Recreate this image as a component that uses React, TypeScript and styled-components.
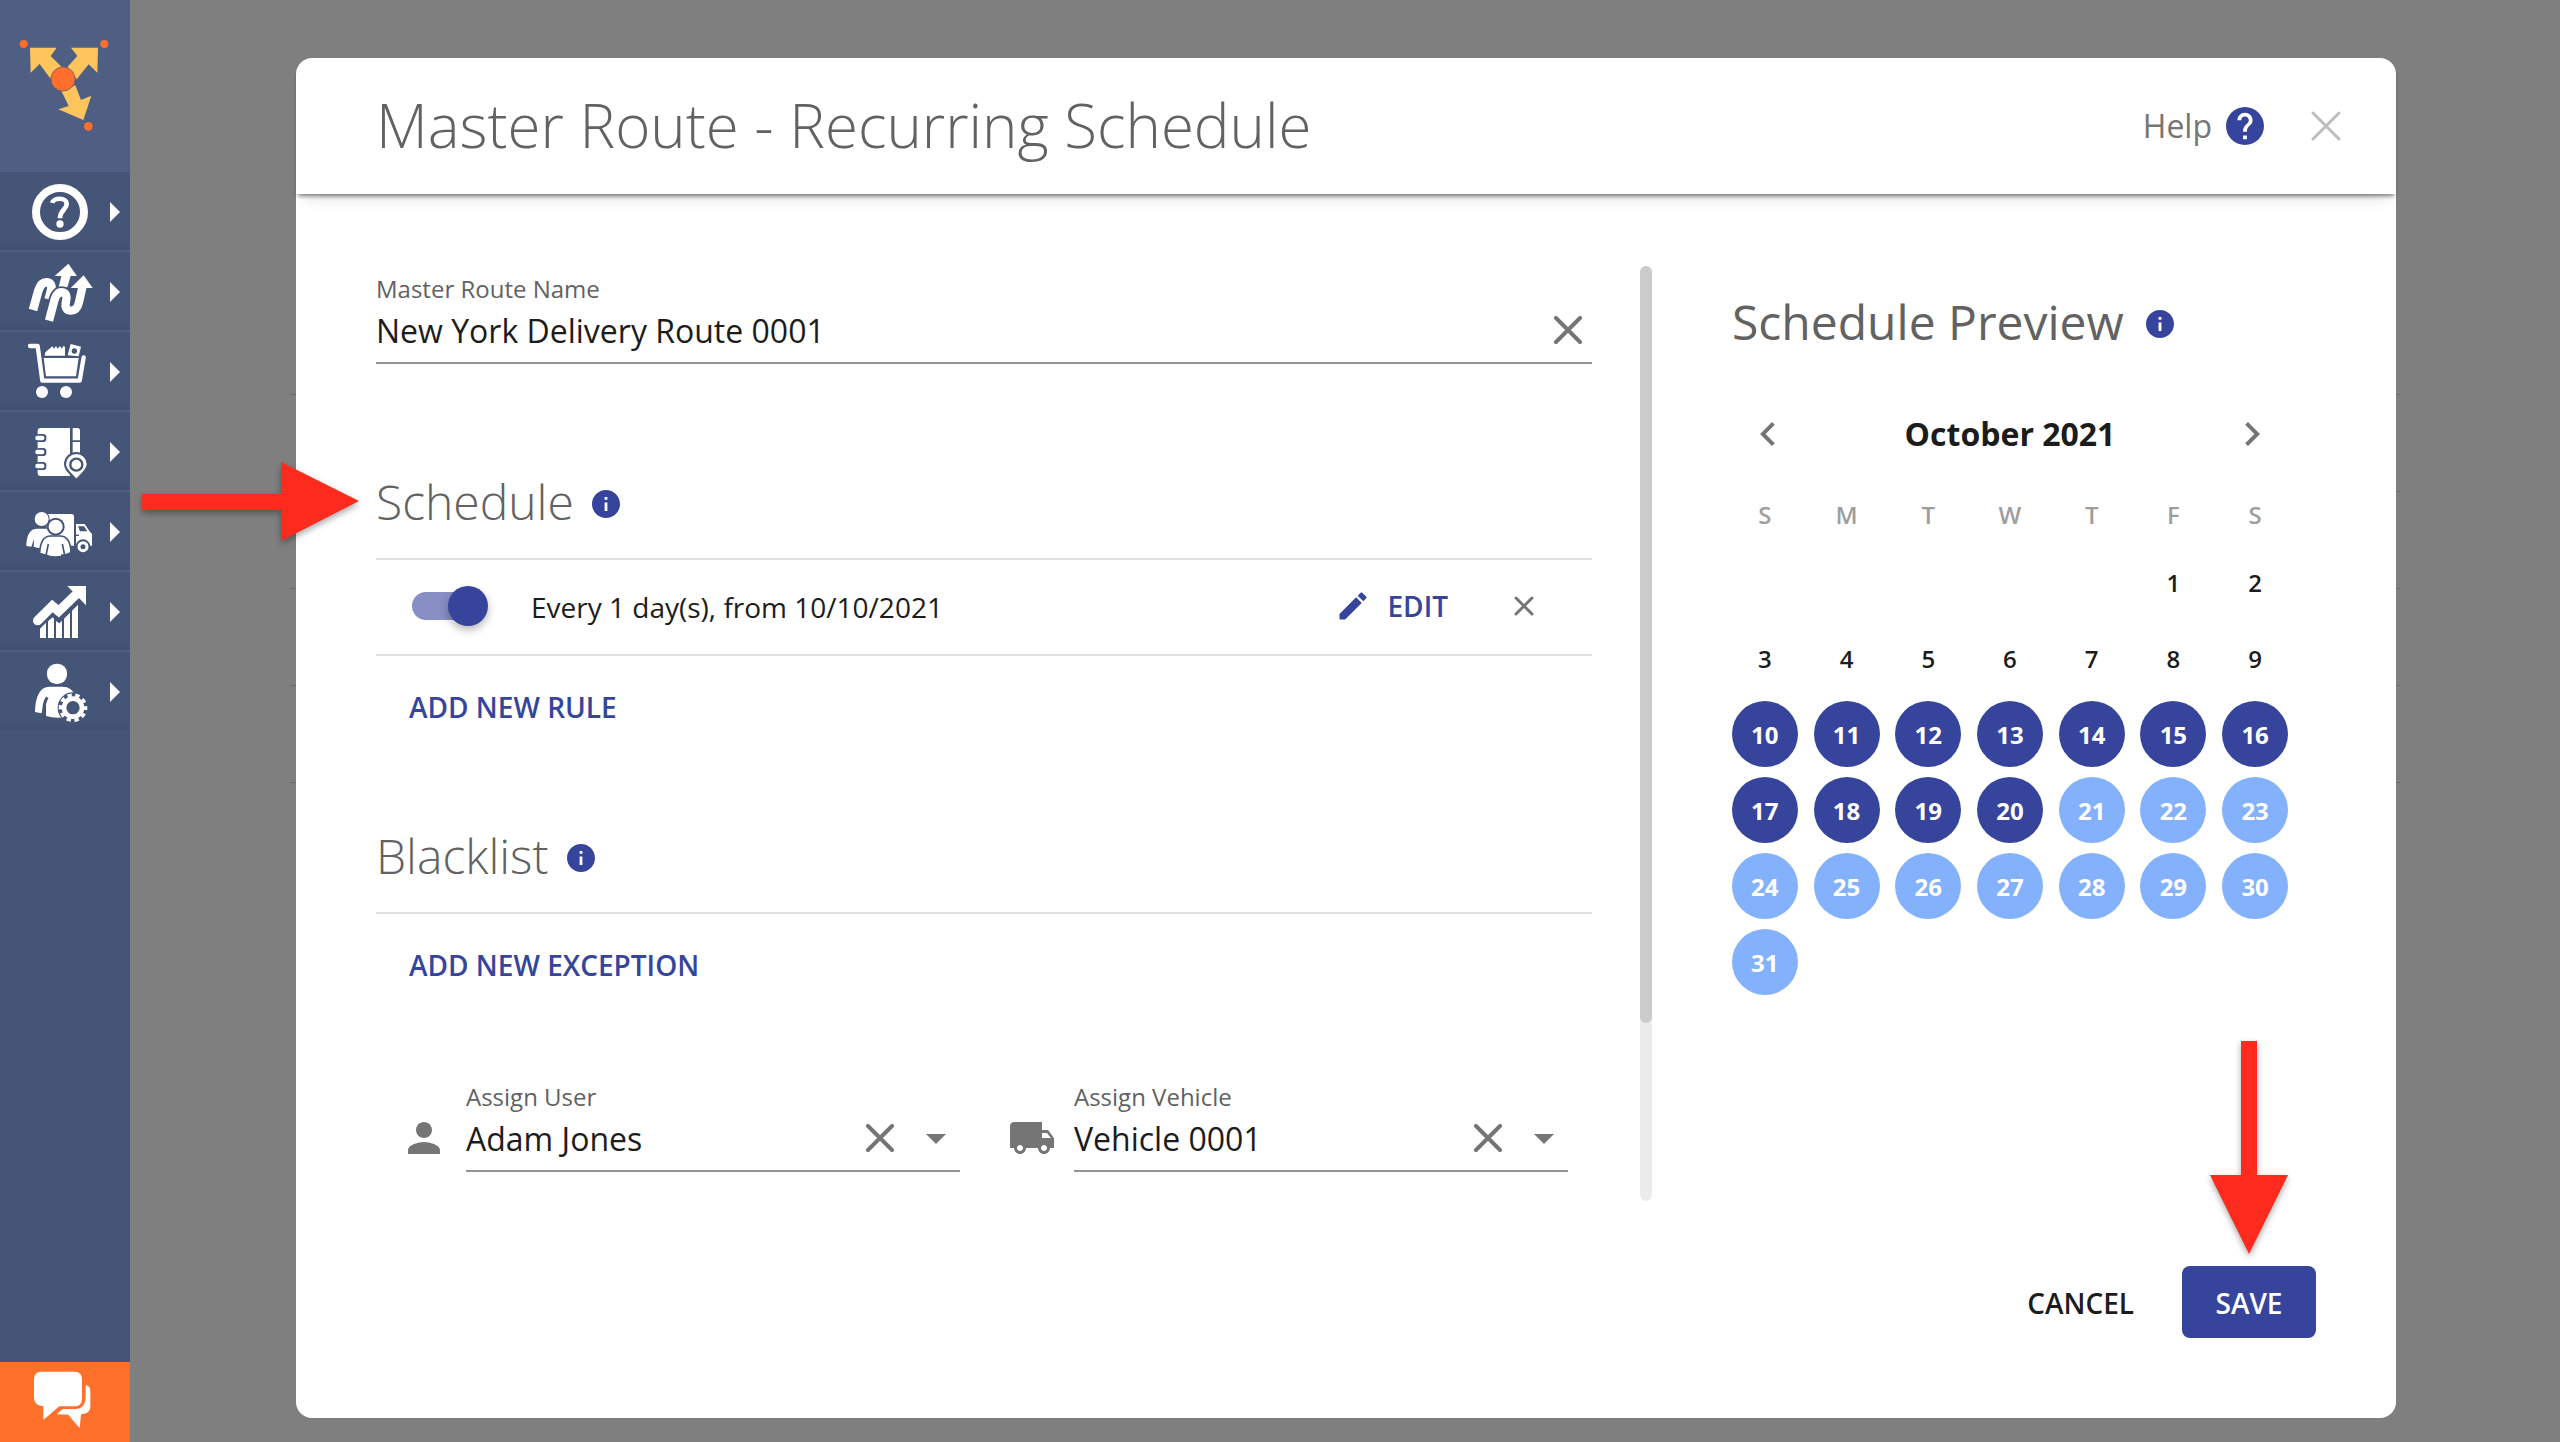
import React, { useState } from "react";
import styled, { createGlobalStyle } from "styled-components";

const color = {
  indigo: "#36459b",
  indigoSoft: "#878fc5",
  sky: "#84b1fc",
  ink: "#1c1c1c",
  grey: "#626262",
  icon: "#757575",
  muted: "#9e9e9e",
  rule: "#e0e0e0",
  underline: "#949494",
  red: "#fc2b1e",
  nav: "#455578",
  navLight: "#4f5f84",
  orange: "#ff702b",
};

const GlobalStyle = createGlobalStyle`
  *, *::before, *::after { box-sizing: border-box; }
  body {
    margin: 0;
    background: #7f7f7f;
    color: ${color.ink};
    font-family: "Open Sans", "Noto Sans", sans-serif;
  }
  button, input, select { font: inherit; color: inherit; }
`;

const Screen = styled.div`
  display: flex;
  min-height: 100vh;
`;

/* ---------- side navigation ---------- */

const Sidebar = styled.nav`
  display: flex;
  flex-direction: column;
  flex: none;
  width: 130px;
  background: ${color.nav};
`;

const LogoLink = styled.a`
  display: flex;
  height: 170px;
  background: ${color.navLight};
`;

const NavItem = styled.button`
  display: flex;
  align-items: center;
  gap: 14px;
  height: 80px;
  padding: 2px 0 0 24px;
  border: 0;
  border-top: 2px solid ${color.navLight};
  background: linear-gradient(${color.nav} 90%, #415073);
  color: #fff;
  cursor: pointer;
`;

const NavCaret = styled.span`
  border: solid transparent;
  border-width: 10px 0 10px 10px;
  border-left-color: #fff;
`;

const ChatButton = styled.button`
  display: flex;
  height: 80px;
  margin-top: auto;
  padding: 0;
  border: 0;
  background: ${color.orange};
  cursor: pointer;
`;

const Logo = () => (
  <svg width="130" height="171" viewBox="0 0 390 513" aria-hidden="true">
    <g fill="#fdc55c">
      <path d="M90 143H170L152 168L186 202L150 234L119 192L92 218Z" />
      <path d="M294 143H213L232 168L203 200L230 238L266 193L292 218Z" />
      <path d="M184 272L206 318L175 328L250 360L274 287L243 300L226 256Z" />
    </g>
    <g fill="#ff6f2b">
      <circle cx="189" cy="237" r="36" stroke="#8c5f5f" strokeWidth="3" />
      <circle cx="71" cy="132" r="12" />
      <circle cx="313" cy="132" r="12" />
      <circle cx="265" cy="379" r="13" />
    </g>
  </svg>
);

const NavGlyph = ({ top, children }: { top: number; children: React.ReactNode }) => (
  <svg width="72" height="64" viewBox={`72 ${top} 216 192`} fill="#fff" aria-hidden="true">
    {children}
  </svg>
);

const HelpGlyph = () => (
  <NavGlyph top={540}>
    <circle cx="180" cy="636" r="72" fill="none" stroke="#fff" strokeWidth="24" />
    <path d="M157 609C160 593 200 590 200 613C200 628 180 630 180 655" fill="none" stroke="#fff" strokeWidth="14" />
    <circle cx="180" cy="672" r="11" />
  </NavGlyph>
);

const RoutesGlyph = () => (
  <NavGlyph top={780}>
    <path d="M205 791L231 828H212L202 862H176L184 828H164Z" />
    <g fill="none">
      <path d="M99 930L115 872Q123 846 141 847Q160 850 152 876L146 898" stroke="#fff" strokeWidth="26" />
      <path d="M147 962L164 898Q172 874 188 877Q204 881 198 904Q192 932 213 932Q232 931 237 906L248 858" stroke={color.nav} strokeWidth="36" />
      <path d="M147 962L164 898Q172 874 188 877Q204 881 198 904Q192 932 213 932Q232 931 237 906L248 858" stroke="#fff" strokeWidth="25" />
    </g>
    <path d="M251 826L278 864H212Z" />
  </NavGlyph>
);

const CartGlyph = () => (
  <NavGlyph top={1020}>
    <path d="M90 1038H113L127 1142H239L251 1072" fill="none" stroke="#fff" strokeWidth="13" strokeLinejoin="round" strokeLinecap="round" />
    <path d="M131 1074H236L228 1129H138Z" />
    <path d="M134 1067L136 1057L157 1039L162 1046L168 1038L173 1046L180 1038L185 1046L190 1038L195 1040V1067Z" />
    <path d="M212 1032L243 1040L236 1069L203 1066Z" />
    <circle cx="223" cy="1053" r="8" fill={color.nav} />
    <circle cx="126" cy="1176" r="18" />
    <circle cx="198" cy="1176" r="18" />
  </NavGlyph>
);

const AddressBookGlyph = () => (
  <NavGlyph top={60}>
    <path d="M122 84H210V228H122Q113 228 113 219V93Q113 84 122 84Z" />
    <path d="M218 84H232Q240 84 240 92V121H218ZM218 126H240V170H218Z" />
    {[114, 156, 198].map((y) => (
      <g key={y}>
        <rect x="108" y={y - 12} width="31" height="24" rx="10" fill={color.nav} />
        <rect x="106" y={y - 7} width="27" height="14" rx="6" />
      </g>
    ))}
    <path
      d="M229 240C211 220 195 209 195 193A34 34 0 0 1 263 193C263 209 247 220 229 240Z"
      stroke={color.nav}
      strokeWidth="6"
    />
    <circle cx="229" cy="194" r="18" fill="none" stroke={color.nav} strokeWidth="7" />
  </NavGlyph>
);

const FleetGlyph = () => (
  <NavGlyph top={300}>
    <path d="M140 342H214Q222 342 222 350V437H140Z" />
    <path d="M228 372H254L268 393L276 402V437H228Z" />
    <path d="M234 379H252L262 394H240Z" fill={color.nav} />
    <path d="M228 404H237V408H228Z" fill={color.nav} />
    <circle cx="249" cy="440" r="22" fill={color.nav} />
    <circle cx="249" cy="440" r="12" fill="none" stroke="#fff" strokeWidth="9" />
    <circle cx="125" cy="357" r="24" fill={color.nav} />
    <circle cx="125" cy="357" r="21" />
    <path d="M79 438C80 404 90 386 112 386H136C150 388 150 402 146 414L124 446L101 440L102 416L94 440Z" />
    <circle cx="167" cy="380" r="27" fill={color.nav} />
    <circle cx="167" cy="380" r="21" />
    <path d="M119 461C120 428 130 408 152 408H180C202 408 212 428 213 458L195 465H186V469Q165 473 147 469L140 466Z" stroke={color.nav} strokeWidth="5" />
    <path d="M145 432L138 466M187 432L194 466" fill="none" stroke={color.nav} strokeWidth="5" />
  </NavGlyph>
);

const GrowthGlyph = () => (
  <NavGlyph top={540}>
    <path d="M120 686L138 668V714H120ZM144 664L158 652L162 656V714H144ZM168 663L178 670L186 662V714H168ZM192 656L210 638V714H192ZM216 632L234 614V714H216Z" />
    <path d="M113 662L157 618L176 634L236 576" fill="none" stroke="#fff" strokeWidth="28" strokeLinecap="round" />
    <path d="M202 558H258V616Z" />
  </NavGlyph>
);

const UserGearGlyph = () => (
  <NavGlyph top={780}>
    <rect x="141" y="791" width="60" height="61" rx="28" />
    <path d="M105 936C106 886 122 860 148 860H188C206 861 216 868 222 880L196 952Q164 956 138 948V908L124 940Z" />
    <path d="M142 892Q130 908 131 944" fill="none" stroke={color.nav} strokeWidth="9" />
    <circle cx="219" cy="923" r="46" fill={color.nav} />
    <circle cx="219" cy="923" r="27" fill="none" stroke="#fff" strokeWidth="14" />
    <circle
      cx="219"
      cy="923"
      r="38"
      fill="none"
      stroke="#fff"
      strokeWidth="10"
      strokeDasharray="13 10.87"
      strokeDashoffset="6"
    />
  </NavGlyph>
);

const ChatGlyph = () => (
  <svg width="130" height="80" viewBox="0 0 390 240" fill="#fff" aria-hidden="true">
    <path d="M124 29H224Q246 30 246 52V110Q246 133 222 133H178L130 174V133Q102 130 102 108V52Q102 30 124 29Z" />
    <path d="M257 68Q271 72 271 86V134Q270 156 243 157L239 199L205 158L170 157L188 141H228Q256 138 257 108Z" />
  </svg>
);

const navItems = [
  { label: "Help", Glyph: HelpGlyph },
  { label: "Routes", Glyph: RoutesGlyph },
  { label: "Orders", Glyph: CartGlyph },
  { label: "Address book", Glyph: AddressBookGlyph },
  { label: "Team and fleet", Glyph: FleetGlyph },
  { label: "Analytics", Glyph: GrowthGlyph },
  { label: "Account settings", Glyph: UserGearGlyph },
];

/* ---------- page under the dialog ---------- */

const Stage = styled.main`
  position: relative;
  display: flex;
  flex: 1;
  min-width: 0;
  padding: 58px 164px 24px 166px;
`;

const DimmedList = styled.div`
  position: absolute;
  top: 298px;
  left: 160px;
  right: 160px;
`;

const DimmedRow = styled.div`
  height: 97px;
  border-bottom: 1px solid #6a6a6a;
`;

/* ---------- dialog ---------- */

const Dialog = styled.section`
  position: relative;
  display: flex;
  flex: 1;
  flex-direction: column;
  min-width: 0;
  border-radius: 16px;
  background: #fff;
`;

const DialogHeader = styled.header`
  display: flex;
  align-items: center;
  height: 136px;
  padding: 0 46px 0 80px;
  border-radius: 16px 16px 0 0;
  box-shadow:
    0 4px 4px -2px rgba(0, 0, 0, 0.5),
    0 12px 16px -8px rgba(0, 0, 0, 0.12);
`;

const Title = styled.h1`
  flex: 1;
  margin: 0;
  padding-bottom: 2px;
  color: ${color.grey};
  font-size: 60px;
  font-weight: 300;
  line-height: 80px;
`;

const HelpLink = styled.a`
  display: flex;
  align-items: center;
  gap: 14px;
  margin-right: 38px;
  color: ${color.icon};
  font-size: 32px;
  line-height: 48px;
  text-decoration: none;
`;

const IconButton = styled.button<{ $tone?: string }>`
  display: flex;
  align-items: center;
  justify-content: center;
  flex: none;
  width: 48px;
  height: 48px;
  padding: 0;
  border: 0;
  background: none;
  color: ${(p) => p.$tone ?? color.icon};
  cursor: pointer;
`;

const DialogBody = styled.div`
  display: flex;
  flex: 1;
  padding: 72px 80px 0;
`;

const FormColumn = styled.form`
  flex: 1;
  min-width: 0;
  padding-top: 6px;
`;

const ScrollTrack = styled.div`
  flex: none;
  width: 12px;
  margin: 0 72px 0 48px;
  border-radius: 6px;
  background: #ececec;
`;

const ScrollThumb = styled.div`
  height: 81%;
  border-radius: 6px;
  background: #cbcbcb;
`;

const PreviewColumn = styled.aside`
  flex: none;
  width: 592px;
  padding-top: 22px;
`;

/* ---------- fields ---------- */

const Field = styled.div`
  flex: 1;
  min-width: 0;
`;

const FieldLabel = styled.label`
  display: block;
  color: ${color.grey};
  font-size: 24px;
  line-height: 34px;
`;

const FieldLine = styled.div`
  display: flex;
  align-items: center;
  height: 58px;
  padding-bottom: 8px;
  border-bottom: 2px solid ${color.underline};
`;

const TextInput = styled.input`
  flex: 1;
  min-width: 0;
  height: 48px;
  padding: 0;
  border: 0;
  outline: 0;
  background: none;
  font-size: 32px;
`;

const SelectInput = styled.select`
  flex: 1;
  min-width: 0;
  height: 48px;
  padding: 0;
  border: 0;
  outline: 0;
  appearance: none;
  background: none;
  font-size: 32px;
`;

const SelectCaret = styled.span`
  flex: none;
  margin: 2px 14px 0 22px;
  border: solid transparent;
  border-width: 10px 10px 0;
  border-top-color: ${color.icon};
`;

const AssignRow = styled.div`
  display: flex;
  gap: 48px;
  margin: 78px 24px 0;
`;

const AssignField = styled.div`
  display: flex;
  flex: 1;
  gap: 18px;
  min-width: 0;
`;

const AssignIcon = styled.span`
  display: flex;
  flex: none;
  padding-top: 34px;
  color: ${color.icon};
`;

/* ---------- sections ---------- */

const Section = styled.section<{ $gap: number }>`
  margin-top: ${(p) => p.$gap}px;
`;

const SectionHead = styled.div`
  position: relative;
  padding-bottom: 22px;
  border-bottom: 2px solid ${color.rule};
`;

const HeadingRow = styled.div`
  display: flex;
  align-items: center;
  gap: 18px;
`;

const Heading = styled.h2<{ $weight?: number }>`
  margin: 0;
  color: ${color.grey};
  font-size: 48px;
  font-weight: ${(p) => p.$weight ?? 300};
  line-height: 68px;
`;

const InfoMark = styled.svg`
  flex: none;
  box-sizing: content-box;
  padding-top: 4px;
`;

const RuleRow = styled.div`
  display: flex;
  align-items: center;
  height: 96px;
  padding: 0 44px 2px 36px;
  border-bottom: 2px solid ${color.rule};
`;

const Switch = styled.input`
  position: relative;
  flex: none;
  width: 72px;
  height: 28px;
  margin: 0 47px 0 0;
  border-radius: 14px;
  appearance: none;
  background: ${color.rule};
  cursor: pointer;

  &::after {
    content: "";
    position: absolute;
    top: -6px;
    left: -4px;
    width: 40px;
    height: 40px;
    border-radius: 50%;
    background: #fafafa;
    box-shadow: 0 4px 8px rgba(0, 0, 0, 0.28);
  }
  &:checked {
    background: ${color.indigoSoft};
  }
  &:checked::after {
    left: 36px;
    background: ${color.indigo};
  }
`;

const RuleText = styled.label`
  flex: 1;
  padding-top: 2px;
  font-size: 28px;
  line-height: 40px;
`;

const TextButton = styled.button`
  height: 74px;
  margin: 14px 0 0 16px;
  padding: 0 17px;
  border: 0;
  background: none;
  color: ${color.indigo};
  font-size: 28px;
  font-weight: 600;
  cursor: pointer;
`;

const EditButton = styled.button`
  display: flex;
  align-items: center;
  gap: 16px;
  margin-right: 52px;
  padding: 0;
  border: 0;
  background: none;
  color: ${color.indigo};
  font-size: 28px;
  font-weight: 600;
  line-height: 40px;
  cursor: pointer;
`;

/* ---------- calendar ---------- */

const PreviewHead = styled(HeadingRow)`
  gap: 22px;
  padding-left: 8px;
`;

const MonthBar = styled.div`
  display: flex;
  align-items: center;
  justify-content: space-between;
  width: 572px;
  margin: 54px 0 26px;
  padding: 0 20px;
`;

const Month = styled.strong`
  font-size: 32px;
  font-weight: 700;
  line-height: 48px;
`;

const Calendar = styled.table`
  width: 572px;
  border-collapse: collapse;
  table-layout: fixed;
  font-size: 24px;
`;

const Weekday = styled.th`
  height: 60px;
  padding: 0;
  color: ${color.muted};
  font-weight: 600;
`;

const DayCell = styled.td`
  height: 76px;
  padding: 0;
`;

type DayKind = "plain" | "past" | "next";

const dayFill: Record<DayKind, string> = {
  plain: "transparent",
  past: color.indigo,
  next: color.sky,
};

const Day = styled.span<{ $kind: DayKind }>`
  display: flex;
  align-items: center;
  justify-content: center;
  width: 66px;
  height: 66px;
  margin: 0 auto;
  border-radius: 50%;
  background: ${(p) => dayFill[p.$kind]};
  color: ${(p) => (p.$kind === "plain" ? color.ink : "#fff")};
  font-weight: ${(p) => (p.$kind === "plain" ? 600 : 700)};
`;

/* ---------- footer ---------- */

const DialogFooter = styled.footer`
  display: flex;
  justify-content: flex-end;
  gap: 16px;
  padding: 65px 80px 80px;
`;

const FooterButton = styled.button<{ $primary?: boolean }>`
  min-width: 134px;
  height: 72px;
  padding: 2px 32px 0;
  border: 0;
  border-radius: 8px;
  background: ${(p) => (p.$primary ? color.indigo : "none")};
  color: ${(p) => (p.$primary ? "#fff" : color.ink)};
  font-size: 28px;
  font-weight: 600;
  cursor: pointer;
`;

const SaveSlot = styled.div`
  position: relative;
`;

/* ---------- pointers ---------- */

const Pointer = styled.svg`
  position: absolute;
  overflow: visible;
  filter: drop-shadow(0 3px 3px rgba(0, 0, 0, 0.35));
  pointer-events: none;
`;

const SchedulePointer = styled(Pointer)`
  top: -6px;
  left: -234px;
`;

const SavePointer = styled(Pointer)`
  right: 28px;
  bottom: 84px;
`;

/* ---------- small icons ---------- */

const Cross = ({ size, stroke = 3 }: { size: number; stroke?: number }) => (
  <svg width={size} height={size} viewBox={`0 0 ${size} ${size}`} aria-hidden="true">
    <path
      d={`M2 2L${size - 2} ${size - 2}M${size - 2} 2L2 ${size - 2}`}
      stroke="currentColor"
      strokeWidth={stroke}
      strokeLinecap="round"
    />
  </svg>
);

const Info = () => (
  <InfoMark width="28" height="28" viewBox="2 2 20 20" fill={color.indigo} role="img" aria-label="More information">
    <path d="M12 2C6.48 2 2 6.48 2 12s4.48 10 10 10 10-4.48 10-10S17.52 2 12 2zm1 15h-2v-6h2v6zm0-8h-2V7h2v2z" />
  </InfoMark>
);

const Chevron = ({ d }: { d: string }) => (
  <svg width="48" height="48" viewBox="0 0 24 24" fill="currentColor" aria-hidden="true">
    <path d={d} />
  </svg>
);

/* ---------- data ---------- */

const weekdays = ["S", "M", "T", "W", "T", "F", "S"];
const firstWeekday = 5;
const weeks = Array.from({ length: 6 }, (_, w) =>
  Array.from({ length: 7 }, (_, d) => {
    const day = w * 7 + d - firstWeekday + 1;
    return day >= 1 && day <= 31 ? day : null;
  }),
);

const kindOf = (day: number): DayKind => (day < 10 ? "plain" : day <= 20 ? "past" : "next");

export default function App() {
  const [name, setName] = useState("New York Delivery Route 0001");
  const [enabled, setEnabled] = useState(true);

  return (
    <>
      <GlobalStyle />
      <Screen>
        <Sidebar aria-label="Main">
          <LogoLink href="#" aria-label="Home">
            <Logo />
          </LogoLink>
          {navItems.map(({ label, Glyph }) => (
            <NavItem key={label} type="button" aria-label={label}>
              <Glyph />
              <NavCaret />
            </NavItem>
          ))}
          <ChatButton type="button" aria-label="Chat">
            <ChatGlyph />
          </ChatButton>
        </Sidebar>

        <Stage>
          <DimmedList aria-hidden="true">
            {[0, 1, 2, 3, 4].map((row) => (
              <DimmedRow key={row} />
            ))}
          </DimmedList>

          <Dialog role="dialog" aria-labelledby="dialog-title">
            <DialogHeader>
              <Title id="dialog-title">Master Route - Recurring Schedule</Title>
              <HelpLink href="#">
                Help
                <svg width="38" height="38" viewBox="2 2 20 20" fill={color.indigo} aria-hidden="true">
                  <path d="M12 2C6.48 2 2 6.48 2 12s4.48 10 10 10 10-4.48 10-10S17.52 2 12 2zm1 17h-2v-2h2v2zm2.07-7.75l-.9.92C13.45 12.9 13 13.5 13 15h-2v-.5c0-1.1.45-2.1 1.17-2.83l1.24-1.26c.37-.36.59-.86.59-1.41 0-1.1-.9-2-2-2s-2 .9-2 2H8c0-2.21 1.79-4 4-4s4 1.79 4 4c0 .88-.36 1.68-.93 2.25z" />
                </svg>
              </HelpLink>
              <IconButton type="button" aria-label="Close" $tone="#bdbdbd">
                <Cross size={30} />
              </IconButton>
            </DialogHeader>

            <DialogBody>
              <FormColumn>
                <Field>
                  <FieldLabel htmlFor="route-name">Master Route Name</FieldLabel>
                  <FieldLine>
                    <TextInput id="route-name" value={name} onChange={(e) => setName(e.target.value)} />
                    <IconButton type="button" aria-label="Clear name" onClick={() => setName("")}>
                      <Cross size={28} stroke={4} />
                    </IconButton>
                  </FieldLine>
                </Field>

                <Section $gap={104}>
                  <SectionHead>
                    <HeadingRow>
                      <Heading>Schedule</Heading>
                      <Info />
                    </HeadingRow>
                    <SchedulePointer width="218" height="80" viewBox="0 0 218 80" aria-hidden="true">
                      <path d="M0 32H139V0L217 39L139 79V48H0Z" fill={color.red} />
                    </SchedulePointer>
                  </SectionHead>
                  <RuleRow>
                    <Switch
                      id="rule-1"
                      type="checkbox"
                      role="switch"
                      checked={enabled}
                      onChange={(e) => setEnabled(e.target.checked)}
                    />
                    <RuleText htmlFor="rule-1">Every 1 day(s), from 10/10/2021</RuleText>
                    <EditButton type="button">
                      <svg width="36" height="36" viewBox="0 0 24 24" fill="currentColor" aria-hidden="true">
                        <path d="M3 17.25V21h3.75L17.81 9.94l-3.75-3.75L3 17.25zM20.71 7.04c.39-.39.39-1.02 0-1.41l-2.34-2.34c-.39-.39-1.02-.39-1.41 0l-1.83 1.83 3.75 3.75 1.83-1.83z" />
                      </svg>
                      EDIT
                    </EditButton>
                    <IconButton type="button" aria-label="Delete rule">
                      <Cross size={20} />
                    </IconButton>
                  </RuleRow>
                  <TextButton type="button">ADD NEW RULE</TextButton>
                </Section>

                <Section $gap={78}>
                  <SectionHead>
                    <HeadingRow>
                      <Heading>Blacklist</Heading>
                      <Info />
                    </HeadingRow>
                  </SectionHead>
                  <TextButton type="button">ADD NEW EXCEPTION</TextButton>
                </Section>

                <AssignRow>
                  <AssignField>
                    <AssignIcon>
                      <svg width="48" height="48" viewBox="0 0 24 24" fill="currentColor" aria-hidden="true">
                        <path d="M12 12c2.21 0 4-1.79 4-4s-1.79-4-4-4-4 1.79-4 4 1.79 4 4 4zm0 2c-2.67 0-8 1.34-8 4v2h16v-2c0-2.66-5.33-4-8-4z" />
                      </svg>
                    </AssignIcon>
                    <Field>
                      <FieldLabel htmlFor="assign-user">Assign User</FieldLabel>
                      <FieldLine>
                        <SelectInput id="assign-user">
                          <option>Adam Jones</option>
                        </SelectInput>
                        <IconButton type="button" aria-label="Clear user">
                          <Cross size={28} stroke={4} />
                        </IconButton>
                        <SelectCaret />
                      </FieldLine>
                    </Field>
                  </AssignField>
                  <AssignField>
                    <AssignIcon>
                      <svg width="48" height="48" viewBox="0 0 24 24" fill="currentColor" aria-hidden="true">
                        <path d="M20 8h-3V4H3c-1.1 0-2 .9-2 2v11h2c0 1.66 1.34 3 3 3s3-1.34 3-3h6c0 1.66 1.34 3 3 3s3-1.34 3-3h2v-5l-3-4zM6 18.5c-.83 0-1.5-.67-1.5-1.5s.67-1.5 1.5-1.5 1.5.67 1.5 1.5-.67 1.5-1.5 1.5zm13.5-9l1.96 2.5H17V9.5h2.5zm-1.5 9c-.83 0-1.5-.67-1.5-1.5s.67-1.5 1.5-1.5 1.5.67 1.5 1.5-.67 1.5-1.5 1.5z" />
                      </svg>
                    </AssignIcon>
                    <Field>
                      <FieldLabel htmlFor="assign-vehicle">Assign Vehicle</FieldLabel>
                      <FieldLine>
                        <SelectInput id="assign-vehicle">
                          <option>Vehicle 0001</option>
                        </SelectInput>
                        <IconButton type="button" aria-label="Clear vehicle">
                          <Cross size={28} stroke={4} />
                        </IconButton>
                        <SelectCaret />
                      </FieldLine>
                    </Field>
                  </AssignField>
                </AssignRow>
              </FormColumn>

              <ScrollTrack>
                <ScrollThumb />
              </ScrollTrack>

              <PreviewColumn>
                <PreviewHead>
                  <Heading $weight={400}>Schedule Preview</Heading>
                  <Info />
                </PreviewHead>
                <MonthBar>
                  <IconButton type="button" aria-label="Previous month">
                    <Chevron d="M15.41 7.41L14 6l-6 6 6 6 1.41-1.41L10.83 12z" />
                  </IconButton>
                  <Month>October 2021</Month>
                  <IconButton type="button" aria-label="Next month">
                    <Chevron d="M10 6L8.59 7.41 13.17 12l-4.58 4.59L10 18l6-6z" />
                  </IconButton>
                </MonthBar>
                <Calendar>
                  <thead>
                    <tr>
                      {weekdays.map((day, i) => (
                        <Weekday key={i} scope="col">
                          {day}
                        </Weekday>
                      ))}
                    </tr>
                  </thead>
                  <tbody>
                    {weeks.map((week, w) => (
                      <tr key={w}>
                        {week.map((day, d) => (
                          <DayCell key={d}>{day && <Day $kind={kindOf(day)}>{day}</Day>}</DayCell>
                        ))}
                      </tr>
                    ))}
                  </tbody>
                </Calendar>
              </PreviewColumn>
            </DialogBody>

            <DialogFooter>
              <FooterButton type="button">CANCEL</FooterButton>
              <SaveSlot>
                <FooterButton type="button" $primary>
                  SAVE
                </FooterButton>
                <SavePointer width="78" height="213" viewBox="0 0 78 213" aria-hidden="true">
                  <path d="M31 0H47V134H78L39 213L0 134H31Z" fill={color.red} />
                </SavePointer>
              </SaveSlot>
            </DialogFooter>
          </Dialog>
        </Stage>
      </Screen>
    </>
  );
}
